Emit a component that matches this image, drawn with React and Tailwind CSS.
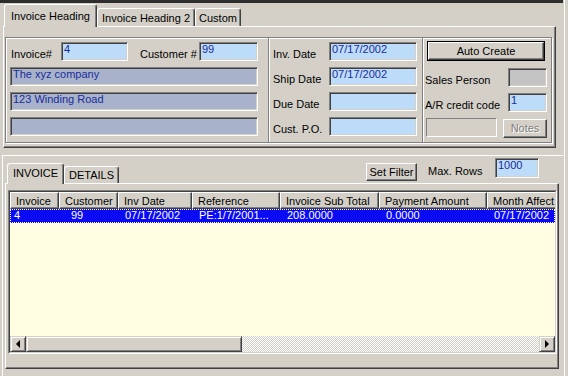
import React from 'react';

const raised =
  'border border-t-white border-l-white border-r-[#404040] border-b-[#404040] shadow-[inset_-1px_-1px_0_#808080]';
const sunken =
  'border border-t-[#808080] border-l-[#808080] border-b-white border-r-white shadow-[inset_1px_1px_0_#404040,inset_-1px_-1px_0_#d4d0c8]';

function Field({ className, children }) {
  return (
    <div className={`h-[19px] ${sunken} leading-[13px] pl-[2px] text-[#1a2b99] whitespace-nowrap overflow-hidden ${className}`}>
      {children}
    </div>
  );
}

function Label({ className, children }) {
  return <div className={`leading-[13px] whitespace-nowrap ${className}`}>{children}</div>;
}

const columns = [
  { title: 'Invoice', w: 'w-[49px]', value: '4', pad: 'pl-[4px]' },
  { title: 'Customer', w: 'w-[59px]', value: '99', pad: 'pl-[12px]' },
  { title: 'Inv Date', w: 'w-[74px]', value: '07/17/2002', pad: 'pl-[7px]' },
  { title: 'Reference', w: 'w-[88px]', value: 'PE:1/7/2001...', pad: 'pl-[7px]' },
  { title: 'Invoice Sub Total', w: 'w-[99px]', value: '208.0000', pad: 'pl-[7px]' },
  { title: 'Payment Amount', w: 'w-[108px]', value: '0.0000', pad: 'pl-[7px]' },
  { title: 'Month Affect', w: 'w-[80px]', value: '07/17/2002', pad: 'pl-[7px]' },
];

function ScrollButton({ dir }) {
  return (
    <div className="w-[16px] h-[16px] shrink-0 flex items-center justify-center border border-t-[#d4d0c8] border-l-[#d4d0c8] border-r-[#404040] border-b-[#404040] shadow-[inset_1px_1px_0_#fff,inset_-1px_-1px_0_#808080] bg-[#d4d0c8]">
      {dir === 'left' ? (
        <div className="w-0 h-0 border-y-[4px] border-y-transparent border-r-[4px] border-r-black" />
      ) : (
        <div className="w-0 h-0 border-y-[4px] border-y-transparent border-l-[4px] border-l-black" />
      )}
    </div>
  );
}

export default function App() {
  return (
    <div className="w-[568px] h-[376px] bg-[#d4d0c8] overflow-hidden flex font-['Liberation_Sans',Arial,sans-serif] text-[11px] text-black">
      <div className="w-[563px] flex flex-col">
        {/* top edge */}
        <div className="h-[3px] bg-[#2e2e2e]" />

        {/* heading tabs */}
        <div className="h-[23px] flex items-end ml-[4px]">
          <div className="relative z-10 h-[23px] -mb-px w-[93px] rounded-t-[3px] border-t border-l border-white border-r border-r-[#404040] shadow-[inset_-1px_0_0_#808080] bg-[#d4d0c8] text-center pt-[5px] leading-[13px]">
            Invoice Heading
          </div>
          <div className="h-[18px] w-[98px] rounded-t-[3px] border-t border-l border-white border-r border-r-[#404040] shadow-[inset_-1px_0_0_#808080] text-center pt-[3px] leading-[13px]">
            Invoice Heading 2
          </div>
          <div className="h-[18px] w-[46px] rounded-t-[3px] border-t border-l border-white border-r border-r-[#404040] shadow-[inset_-1px_0_0_#808080] text-center pt-[3px] leading-[13px]">
            Custom
          </div>
        </div>

        {/* heading panel */}
        <div className={`ml-[3px] w-[553px] h-[122px] shrink-0 ${raised}`}>
          <div className="mt-[10px] ml-[1px] w-[547px] h-[106px] border border-[#808080] shadow-[inset_1px_1px_0_#fff,1px_1px_0_#fff] flex">
            {/* customer block */}
            <div className="w-[262px] pt-[4px] flex flex-col gap-[6px]">
              <div className="flex items-end pl-[5px]">
                <Label className="w-[50px]">Invoice#</Label>
                <Field className="w-[67px] bg-[#bddcf9]">4</Field>
                <Label className="ml-[12px] w-[59px]">Customer #</Label>
                <Field className="w-[59px] bg-[#bddcf9]">99</Field>
              </div>
              <Field className="ml-[4px] w-[248px] bg-[#a8b3cb] pl-[1px]">The xyz company</Field>
              <Field className="ml-[4px] w-[248px] bg-[#a8b3cb] pl-[1px]">123 Winding Road</Field>
              <Field className="ml-[4px] w-[248px] bg-[#a8b3cb]" />
            </div>
            <div className="w-[2px] border-l border-l-[#808080] border-r border-r-white" />

            {/* dates block */}
            <div className="w-[152px] pt-[4px] pl-[3px] flex flex-col gap-[6px]">
              {[
                ['Inv. Date', '07/17/2002'],
                ['Ship Date', '07/17/2002'],
                ['Due Date', ''],
                ['Cust. P.O.', ''],
              ].map(([label, value]) => (
                <div key={label} className="flex items-end">
                  <Label className="w-[56px]">{label}</Label>
                  <Field className="w-[88px] bg-[#bddcf9]">{value}</Field>
                </div>
              ))}
            </div>
            <div className="w-[2px] border-l border-l-[#808080] border-r border-r-white" />

            {/* actions block */}
            <div className="flex-1 pl-[1px] pt-[3px] flex flex-col">
              <div className="ml-[2px] w-[118px] h-[20px] border border-black">
                <div className={`h-full ${raised} flex items-center justify-center leading-[13px]`}>Auto Create</div>
              </div>
              <div className="mt-[7px] flex items-end">
                <Label className="w-[83px]">Sales Person</Label>
                <Field className="w-[39px] bg-[#c3c3c3]" />
              </div>
              <div className="mt-[6px] flex items-end">
                <Label className="w-[83px]">A/R credit code</Label>
                <Field className="w-[39px] bg-[#bddcf9]">1</Field>
              </div>
              <div className="mt-[6px] flex items-start">
                <div className="ml-[1px] w-[71px] h-[19px] border border-t-[#808080] border-l-[#808080] border-b-white border-r-white" />
                <div className={`ml-[6px] mt-[1px] w-[44px] h-[19px] ${raised} flex items-center justify-center leading-[13px] text-[#808080] [text-shadow:1px_1px_0_#fff]`}>
                  Notes
                </div>
              </div>
            </div>
          </div>
        </div>

        {/* lower frame */}
        <div className="mt-[7px] ml-[2px] flex-1 border-t border-l border-white flex flex-col">
          <div className="h-[27px] ml-[2px] w-[554px] flex items-end">
            <div className="relative z-10 ml-[2px] h-[21px] -mb-px w-[57px] rounded-t-[3px] border-t border-l border-white border-r border-r-[#404040] shadow-[inset_-1px_0_0_#808080] bg-[#d4d0c8] text-center pt-[3px] leading-[13px]">
              INVOICE
            </div>
            <div className="h-[17px] w-[55px] rounded-t-[3px] border-t border-l border-white border-r border-r-[#404040] shadow-[inset_-1px_0_0_#808080] text-center pt-[2px] leading-[13px]">
              DETAILS
            </div>
            <div className="self-start ml-auto mr-[20px] flex items-start">
              <div className={`mt-[7px] w-[51px] h-[18px] ${raised} flex items-center justify-center leading-[13px]`}>Set Filter</div>
              <Label className="mt-[9px] ml-[11px] w-[67px]">Max. Rows</Label>
              <Field className="mt-[2px] w-[44px] h-[20px] bg-[#bddcf9]">1000</Field>
            </div>
          </div>

          <div className={`ml-[2px] w-[554px] h-[186px] shrink-0 ${raised}`}>
            {/* grid */}
            <div className="mt-[6px] ml-[2px] w-[549px] h-[164px] border border-t-[#808080] border-l-[#808080] border-b-white border-r-white">
              <div className="h-full border border-t-[#404040] border-l-[#404040] border-b-[#d4d0c8] border-r-[#d4d0c8] flex flex-col overflow-hidden">
                <div className="h-[17px] flex shrink-0">
                  {columns.map((c) => (
                    <div
                      key={c.title}
                      className={`${c.w} shrink-0 h-full border border-t-white border-l-white border-r-[#404040] border-b-[#404040] shadow-[inset_-1px_-1px_0_#808080] pl-[5px] pt-[2px] leading-[13px] whitespace-nowrap overflow-hidden`}
                    >
                      {c.title}
                    </div>
                  ))}
                </div>
                <div className="flex-1 bg-[#fffde1] flex flex-col">
                  <div className="h-[14px] bg-[#0a0af5] text-white flex outline outline-1 outline-dotted outline-white -outline-offset-1">
                    {columns.map((c) => (
                      <div key={c.title} className={`${c.w} shrink-0 ${c.pad} leading-[13px] whitespace-nowrap overflow-hidden`}>
                        {c.value}
                      </div>
                    ))}
                  </div>
                </div>
                <div className="h-[16px] flex shrink-0">
                  <ScrollButton dir="left" />
                  <div className="w-[216px] shrink-0 border border-t-[#d4d0c8] border-l-[#d4d0c8] border-r-[#404040] border-b-[#404040] shadow-[inset_1px_1px_0_#fff,inset_-1px_-1px_0_#808080]" />
                  <div className="flex-1 bg-[repeating-conic-gradient(#d4d0c8_0_25%,#ffffff_0_50%)] bg-[length:2px_2px]" />
                  <ScrollButton dir="right" />
                </div>
              </div>
            </div>
          </div>
        </div>
      </div>

      {/* window edge */}
      <div className="flex-1 flex">
        <div className="w-px" />
        <div className="w-px bg-white" />
      </div>
    </div>
  );
}
